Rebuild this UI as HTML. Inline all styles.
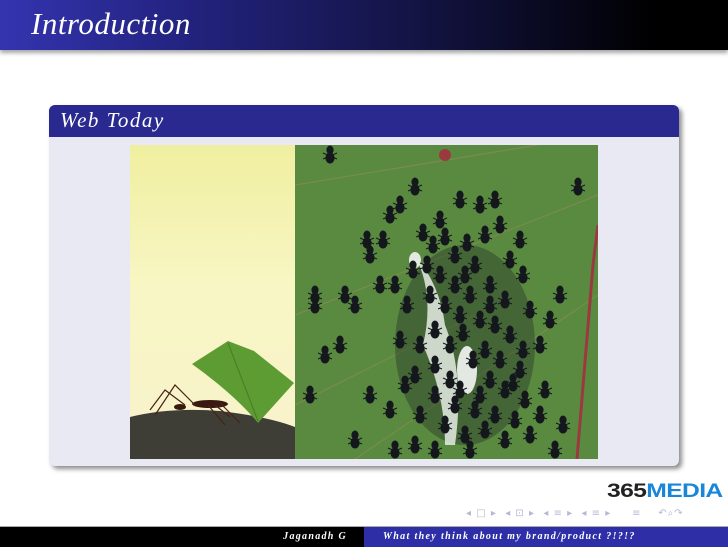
<!DOCTYPE html>
<html><head><meta charset="utf-8"><style>
*{margin:0;padding:0;box-sizing:border-box}
body{width:728px;height:546px;background:#fff;position:relative;overflow:hidden;font-family:"Liberation Serif",serif}
.title{position:absolute;left:0;top:0;width:728px;height:50px;background:linear-gradient(90deg,#3434b0 0%,#232380 25%,#12123f 60%,#000 90%);box-shadow:0 3px 4px rgba(0,0,0,.35)}
.title span{position:absolute;left:31px;top:6px;color:#fff;font-style:italic;font-size:31px;letter-spacing:0.5px}
.block{position:absolute;left:49px;top:105px;width:630px;height:361px;border-radius:6px;background:#e9e9f3;box-shadow:3px 3px 5px rgba(0,0,0,.45);overflow:hidden}
.bh{height:32px;background:#29298f;color:#fff;font-style:italic;font-size:21px;padding:3px 0 0 11px;letter-spacing:1.5px}
.footer{position:absolute;left:0;top:526px;width:728px;height:20px;border-top:1px solid #aaa}
.fl{position:absolute;left:0;top:0;width:364px;height:20px;background:#000;color:#fff;font-style:italic;font-weight:bold;font-size:10px;text-align:right;padding:4px 17px 0 0;letter-spacing:1.3px}
.fr{position:absolute;left:364px;top:0;width:364px;height:20px;background:#2e2ea6;color:#fff;font-style:italic;font-weight:bold;font-size:10px;padding:4px 0 0 19px;letter-spacing:1.35px}
.nav{position:absolute;top:508px;left:466px;font-size:10px;color:#b8b8d4;font-family:"DejaVu Sans",sans-serif;letter-spacing:1px;white-space:nowrap}
.logo{position:absolute;left:607px;top:481px;font-family:"Liberation Sans",sans-serif;font-weight:bold;font-size:19px;letter-spacing:-0.5px;transform:scaleX(1.3);transform-origin:left}
</style></head><body>
<div class="title"><span>Introduction</span></div>
<div class="block"><div class="bh">Web Today</div></div>
<div style="position:absolute;left:130px;top:145px;width:165px;height:314px;background:linear-gradient(180deg,#f0efa0 0%,#f8f6c4 45%,#f8f2cc 100%);overflow:hidden">
<svg width="165" height="314">
<path d="M0 272 Q40 262 90 266 Q140 272 165 282 L165 314 L0 314Z" fill="#3e3d36"/>
<path d="M62 219 L98 196 L124 206 L164 238 L128 278 Q105 250 62 219Z" fill="#5d9b33"/>
<path d="M98 198 L128 276" stroke="#4a7a28" stroke-width="1"/>
<ellipse cx="80" cy="259" rx="18" ry="4" fill="#3a1a10"/>
<ellipse cx="50" cy="262" rx="6" ry="3" fill="#3a1a10"/>
<path d="M55 260 L35 245 L20 265 M65 260 L45 240 L25 270 M85 260 L100 272 M78 260 L95 280 M90 258 L110 278" stroke="#4a2215" stroke-width="1.2" fill="none"/>
</svg></div>
<div style="position:absolute;left:295px;top:145px;width:303px;height:314px;overflow:hidden">
<svg width="303" height="314">
<defs><g id="a"><ellipse cx="0" cy="-5" rx="3.6" ry="4.5" fill="#14181d"/><ellipse cx="0" cy="3" rx="4.6" ry="5.5" fill="#14181d"/><path d="M-7 -2 L7 4 M-7 4 L7 -2" stroke="#14181d" stroke-width="1"/></g></defs>
<rect width="303" height="314" fill="#5a8a40"/>
<path d="M0 40 L303 -10 M0 170 L303 50 M60 314 L303 150 M0 260 L180 170" stroke="#8a8a55" stroke-width="1" fill="none" opacity=".8"/>
<path d="M282 314 L298 120 L303 80" stroke="#9a3a40" stroke-width="3" fill="none"/>
<circle cx="150" cy="10" r="6" fill="#9a3a40"/>
<ellipse cx="170" cy="200" rx="70" ry="100" fill="#2b3a2b" opacity=".45"/>
<path d="M120 110 Q140 150 128 200 Q150 250 150 300 L160 300 Q170 230 150 180 Q145 140 120 110Z" fill="#dde4da" opacity=".9"/>
<ellipse cx="120" cy="115" rx="6" ry="8" fill="#e4e8e2"/>
<ellipse cx="172" cy="225" rx="10" ry="24" fill="#e4e8e2"/>
<g>
<use href="#a" x="35" y="10"/>
<use href="#a" x="120" y="42"/><use href="#a" x="105" y="60"/><use href="#a" x="95" y="70"/>
<use href="#a" x="88" y="95"/><use href="#a" x="72" y="95"/><use href="#a" x="200" y="55"/>
<use href="#a" x="283" y="42"/><use href="#a" x="75" y="110"/><use href="#a" x="145" y="75"/>
<use href="#a" x="128" y="88"/><use href="#a" x="138" y="100"/><use href="#a" x="150" y="92"/>
<use href="#a" x="160" y="110"/><use href="#a" x="172" y="98"/><use href="#a" x="180" y="120"/>
<use href="#a" x="190" y="90"/><use href="#a" x="205" y="80"/><use href="#a" x="215" y="115"/>
<use href="#a" x="228" y="130"/><use href="#a" x="118" y="125"/><use href="#a" x="132" y="120"/>
<use href="#a" x="145" y="130"/><use href="#a" x="160" y="140"/><use href="#a" x="175" y="150"/>
<use href="#a" x="195" y="140"/><use href="#a" x="210" y="155"/><use href="#a" x="150" y="160"/>
<use href="#a" x="135" y="150"/><use href="#a" x="165" y="170"/><use href="#a" x="185" y="175"/>
<use href="#a" x="200" y="180"/><use href="#a" x="215" y="190"/><use href="#a" x="140" y="185"/>
<use href="#a" x="125" y="200"/><use href="#a" x="155" y="200"/><use href="#a" x="190" y="205"/>
<use href="#a" x="205" y="215"/><use href="#a" x="225" y="225"/><use href="#a" x="140" y="220"/>
<use href="#a" x="155" y="235"/><use href="#a" x="195" y="235"/><use href="#a" x="210" y="245"/>
<use href="#a" x="230" y="255"/><use href="#a" x="140" y="250"/><use href="#a" x="160" y="260"/>
<use href="#a" x="180" y="265"/><use href="#a" x="200" y="270"/><use href="#a" x="220" y="275"/>
<use href="#a" x="150" y="280"/><use href="#a" x="170" y="290"/><use href="#a" x="190" y="285"/>
<use href="#a" x="210" y="295"/><use href="#a" x="235" y="290"/><use href="#a" x="125" y="270"/>
<use href="#a" x="110" y="240"/><use href="#a" x="120" y="230"/><use href="#a" x="105" y="195"/>
<use href="#a" x="112" y="160"/><use href="#a" x="100" y="140"/><use href="#a" x="245" y="200"/>
<use href="#a" x="255" y="175"/><use href="#a" x="265" y="150"/><use href="#a" x="235" y="165"/>
<use href="#a" x="60" y="160"/><use href="#a" x="50" y="150"/><use href="#a" x="45" y="200"/>
<use href="#a" x="30" y="210"/><use href="#a" x="20" y="150"/><use href="#a" x="20" y="160"/>
<use href="#a" x="75" y="250"/><use href="#a" x="95" y="265"/><use href="#a" x="120" y="300"/>
<use href="#a" x="60" y="295"/><use href="#a" x="250" y="245"/><use href="#a" x="268" y="280"/>
<use href="#a" x="165" y="55"/><use href="#a" x="185" y="60"/><use href="#a" x="225" y="95"/>
<use href="#a" x="245" y="270"/><use href="#a" x="100" y="305"/><use href="#a" x="260" y="305"/>
<use href="#a" x="140" y="305"/><use href="#a" x="175" y="305"/><use href="#a" x="85" y="140"/>
<use href="#a" x="15" y="250"/><use href="#a" x="168" y="188"/><use href="#a" x="178" y="215"/>
<use href="#a" x="165" y="245"/><use href="#a" x="185" y="250"/><use href="#a" x="170" y="130"/>
<use href="#a" x="195" y="160"/><use href="#a" x="218" y="238"/><use href="#a" x="228" y="205"/>
</g></svg></div>
<div class="logo"><span style="color:#222">365</span><span style="color:#1a86d8">MEDIA</span></div>
<div class="nav">◂ □ ▸ &nbsp;◂ ⊡ ▸ &nbsp;◂ ≡ ▸ &nbsp;◂ ≡ ▸ &nbsp; &nbsp; ≡ &nbsp; &nbsp;↶⌕↷</div>
<div class="footer"><div class="fl">Jaganadh G</div><div class="fr">What they think about my brand/product ?!?!?</div></div>
</body></html>
